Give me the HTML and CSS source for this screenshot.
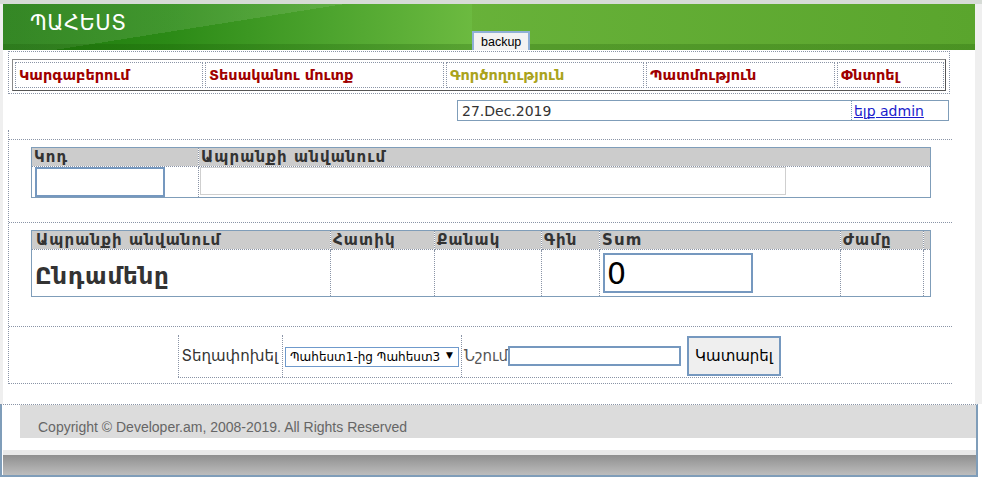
FILE: index.html
```html
<!DOCTYPE html>
<html lang="hy">
<head>
    <meta charset="UTF-8">
    <title>ՊԱՀԵՍՏ</title>
    <link rel="stylesheet" href="styles.css">
</head>
<body>

<div class="page">
    <div class="header">
        <div class="brand">ՊԱՀԵՍՏ</div>
        <button class="backupButton">backup</button>
    </div>

    <div class="content">
        <div class="navWrap">
            <div class="nav">
                <a class="navItem w1" href="#">Կարգաբերում</a>
                <a class="navItem w2" href="#">Տեսականու մուտք</a>
                <a class="navItem w3 active" href="#">Գործողություն</a>
                <a class="navItem w4" href="#">Պատմություն</a>
                <a class="navItem w5" href="#">Փնտրել</a>
            </div>
        </div>

        <div class="dateRow">
            <div class="dateBox">
                <div class="dateText">27.Dec.2019</div>
                <div class="logoutCell"><a href="#">ելք admin</a></div>
            </div>
        </div>

        <div class="main">
            <div class="spacer"></div>

            <div class="section s1">
                <table class="grid searchGrid">
                    <tr class="head">
                        <th class="colCode">Կոդ</th>
                        <th>Ապրանքի անվանում</th>
                    </tr>
                    <tr class="body1">
                        <td class="colCode"><input type="text" id="codeInput" class="blueInput"></td>
                        <td class="dotLeft"><input type="text" id="nameInput" class="greyInput"></td>
                    </tr>
                </table>
            </div>

            <div class="section s2">
                <table class="grid itemsGrid">
                    <tr class="head">
                        <th class="c1">Ապրանքի անվանում</th>
                        <th class="c2">Հատիկ</th>
                        <th class="c3">Քանակ</th>
                        <th class="c4">Գին</th>
                        <th class="c5">Sum</th>
                        <th class="c6">Ժամը</th>
                        <th class="c7"></th>
                    </tr>
                    <tr class="body2">
                        <td class="c1 total">Ընդամենը</td>
                        <td class="c2"></td>
                        <td class="c3"></td>
                        <td class="c4"></td>
                        <td class="c5"><input type="text" id="sumInput" class="blueInput" value="0"></td>
                        <td class="c6"></td>
                        <td class="c7"></td>
                    </tr>
                </table>
            </div>

            <div class="section s3">
                <div class="moveRow">
                    <div class="moveCell label">Տեղափոխել</div>
                    <div class="moveCell selectCell">
                        <div class="selectWrap">
                            <select id="moveSelect">
                                <option>Պահեստ1-ից Պահեստ3</option>
                                <option>Պահեստ3-ից Պահեստ1</option>
                            </select>
                            <span class="arrow">▼</span>
                        </div>
                    </div>
                    <div class="moveCell noteCell">
                        <span class="noteLabel">Նշում</span><input type="text" id="noteInput" class="blueInput">
                    </div>
                    <div class="moveCell buttonCell">
                        <button class="doButton">Կատարել</button>
                    </div>
                </div>
            </div>
        </div>
    </div>
</div>

<div class="footer">
    <div class="footerBar">Copyright © Developer.am, 2008-2019. All Rights Reserved</div>
    <div class="footerGap"></div>
    <div class="footerShadow"></div>
</div>

</body>
</html>
```

FILE: styles.css
```css
body {
    margin: 0;
    padding: 0;
    font-family: "DejaVu Sans", sans-serif;
    background-color: #fff;
    color: #333;
}

.page {
    width: 972px;
    border-top: 4px solid #d6dbd6;
    padding: 0 7px 0 3px;
    background-color: #efefef;
}

/* header */

.header {
    height: 46px;
    display: flex;
    background:
        linear-gradient(to bottom, transparent 40px, rgba(20, 80, 0, 0.22) 40px),
        linear-gradient(to right, #74bd44, #5aa52d);
}

.brand {
    width: 442px;
    padding-left: 27px;
    color: #fff;
    font-size: 21px;
    letter-spacing: 0.5px;
    line-height: 38px;
    background:
        linear-gradient(to bottom, transparent 40px, rgba(20, 80, 0, 0.22) 40px),
        linear-gradient(171deg, rgba(255, 255, 255, 0.10) 45%, transparent 45%),
        linear-gradient(to right, #1d790c 0%, #2b8a16 35%, #4da42e 70%, #6cba40 100%);
}

.backupButton {
    align-self: flex-end;
    height: 19px;
    padding: 0 7px;
    font-family: "Liberation Sans", Arial, sans-serif;
    font-size: 12.5px;
    color: #000;
    background-color: #f2f2f2;
    border: 2px solid #8fb0d6;
    border-bottom: none;
}

/* content */

.content {
    background-color: #fff;
    padding-top: 1px;
    padding-bottom: 20px;
}

.navWrap {
    margin-left: 5px;
    width: 940px;
    height: 41px;
    border: 1px dotted #8a94a6;
}

.nav {
    margin: 7px 3px 0 3px;
    height: 26px;
    display: flex;
    gap: 2px;
    padding: 2px;
    border: 1px solid #555;
    border-top-color: #888;
    border-left-color: #888;
}

.navItem {
    box-sizing: border-box;
    flex-shrink: 0;
    height: 26px;
    padding: 4px 3px 0 3px;
    border: 1px dotted #8a94a6;
    color: #a00000;
    font-weight: bold;
    font-size: 14.5px;
    text-decoration: none;
    white-space: nowrap;
}

.navItem.active {
    color: #aaa31c;
}

.w1 { width: 188px; }
.w2 { width: 239px; }
.w3 { width: 198px; }
.w4 { width: 189px; }
.w5 { width: 107px; }

.dateRow {
    margin-top: 6px;
    width: 946px;
    display: flex;
    justify-content: flex-end;
}

.dateBox {
    width: 490px;
    height: 19px;
    display: flex;
    border: 1px solid #7f9db9;
    font-size: 14px;
    line-height: 20px;
}

.dateText {
    width: 389px;
    padding-left: 4px;
    color: #333;
}

.logoutCell {
    flex: 1;
    border-left: 1px dotted #7f9db9;
    padding-left: 2px;
}

.logoutCell a {
    color: #1a1acc;
}

.main {
    margin-top: 9px;
    margin-left: 5px;
    width: 943px;
    border-left: 1px dotted #8a94a6;
}

.spacer {
    height: 9px;
    border-bottom: 1px dotted #8a94a6;
}

.section {
    box-sizing: border-box;
    border-bottom: 1px dotted #8a94a6;
}

.s1 { height: 83px; padding-top: 7px; }
.s2 { height: 104px; padding-top: 7px; }
.s3 { height: 57px; padding-top: 8px; }

/* tables */

.grid {
    margin-left: 22px;
    width: 900px;
    border-collapse: collapse;
    table-layout: fixed;
    border: 1px solid #7f9db9;
}

.grid th {
    height: 18px;
    padding: 0 2px;
    background-color: #cccccc;
    border-bottom: 1px dotted #8a94a6;
    text-align: left;
    font-size: 15px;
    letter-spacing: 1.1px;
    font-weight: bold;
    color: #333;
    white-space: nowrap;
    overflow: hidden;
}

.grid td {
    padding: 0;
}

.searchGrid .colCode {
    width: 162px;
    border-right: 1px dotted #8a94a6;
}

.body1 td {
    height: 30px;
    vertical-align: bottom;
}

.blueInput {
    box-sizing: border-box;
    border: 2px solid #7598bf;
    background-color: #fff;
    font-family: "DejaVu Sans", sans-serif;
    outline: none;
}

#codeInput {
    margin-left: 3px;
    width: 130px;
    height: 30px;
    display: block;
}

.greyInput {
    box-sizing: border-box;
    display: block;
    margin: 0 0 2px 1px;
    width: 586px;
    height: 28px;
    border: 1px solid #cfcfcf;
}

.itemsGrid th, .itemsGrid td {
    border-right: 1px dotted #8a94a6;
}

.itemsGrid .c7 {
    border-right: none;
}

.itemsGrid th.c1 { padding-left: 4px; }

.c1 { width: 292px; }
.c2 { width: 99px; }
.c3 { width: 102px; }
.c4 { width: 53px; }
.c5 { width: 236px; }
.c6 { width: 78px; }
.c7 { width: 2px; }

.body2 td {
    height: 46px;
}

.total {
    padding-left: 3px !important;
    font-size: 23px;
    letter-spacing: 0.8px;
    font-weight: bold;
    color: #333;
    vertical-align: bottom;
    line-height: 40px;
}

#sumInput {
    display: block;
    margin-left: 3px;
    width: 150px;
    height: 40px;
    font-size: 30px;
    padding: 0 2px;
    color: #000;
}

/* move row */

.moveRow {
    display: flex;
    margin-left: 169px;
    width: 605px;
    height: 42px;
    border-bottom: 1px dotted #8a94a6;
}

.moveCell {
    display: flex;
    align-items: center;
    flex-shrink: 0;
    box-sizing: border-box;
}

.label {
    width: 105px;
    padding-right: 4px;
    justify-content: flex-end;
    border-left: 1px dotted #8a94a6;
    border-right: 1px dotted #8a94a6;
    font-size: 15px;
    color: #333;
}

.selectCell {
    width: 179px;
    padding-left: 2px;
    border-right: 1px dotted #8a94a6;
}

.selectWrap {
    position: relative;
}

#moveSelect {
    appearance: none;
    -webkit-appearance: none;
    width: 174px;
    height: 20px;
    padding: 0 0 0 4px;
    border: 1px solid #6f9acc;
    border-radius: 0;
    background-color: #fff;
    font-family: "DejaVu Sans", sans-serif;
    font-size: 12px;
    color: #000;
}

.arrow {
    position: absolute;
    right: 6px;
    top: 4px;
    font-size: 9px;
    color: #000;
}

.noteCell {
    width: 224px;
    padding-left: 2px;
}

.noteLabel {
    font-size: 15px;
    color: #555;
}

#noteInput {
    width: 173px;
    height: 20px;
}

.buttonCell {
    width: 97px;
    align-items: flex-start;
    padding-top: 1px;
    padding-left: 1px;
}

.doButton {
    width: 94px;
    height: 40px;
    padding: 0;
    background-color: #efefef;
    border: 2px solid #7598bf;
    font-family: "DejaVu Sans", sans-serif;
    font-size: 15px;
    color: #000;
}

/* footer */

.footer {
    width: 973px;
    border-left: 2px solid #7f9db9;
    border-right: 2px solid #7f9db9;
    border-bottom: 2px solid #7f9db9;
    border-top: 1px dotted #8a94a6;
    padding-left: 1px;
    background-color: #fff;
}

.footerBar {
    margin-left: 17px;
    height: 21px;
    padding-top: 12px;
    line-height: 21px;
    padding-left: 18px;
    background-color: #dcdcdc;
    font-family: "Liberation Sans", Arial, sans-serif;
    font-size: 14px;
    color: #666;
}

.footerGap {
    height: 12px;
    border-bottom: 5px solid #e9e9e9;
}

.footerShadow {
    height: 20px;
    background: linear-gradient(to bottom, #8f8f8f, #bdbdbd);
}
```
